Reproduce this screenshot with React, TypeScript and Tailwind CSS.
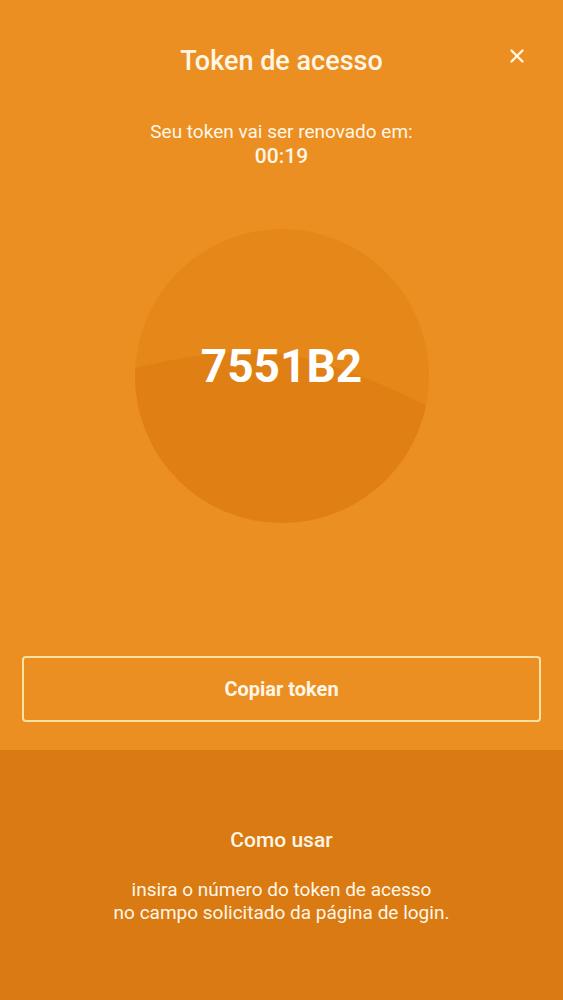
import { X } from "lucide-react";

export default function App() {
  return (
    <div
      className="relative flex h-[1000px] w-full flex-col bg-[#ec8f22] text-[#fff6e6]"
      style={{ fontFamily: "Roboto, 'Noto Sans', sans-serif" }}
    >
      {/* Close */}
      <button className="absolute right-[35px] top-[45px] flex h-[22px] w-[22px] items-center justify-center text-[#fff6e6]">
        <X size={22} strokeWidth={2.6} />
      </button>

      {/* Top */}
      <div className="flex flex-1 flex-col items-center">
        <h1 className="pt-[45px] text-[27px] font-medium leading-[32px]">Token de acesso</h1>

        <div className="mt-[42px] flex flex-col items-center">
          <p className="text-[19px] leading-[25px]">Seu token vai ser renovado em:</p>
          <p className="text-[21px] font-medium leading-[25px]">00:19</p>
        </div>

        {/* Token circle */}
        <div className="relative mt-[60px] flex h-[294px] w-[294px] items-center justify-center overflow-hidden rounded-full bg-[#e6871a]">
          <svg className="absolute inset-0" width="294" height="294" viewBox="0 0 294 294">
            <path
              d="M0 139 C 50 128, 95 120, 135 123 S 240 150, 294 178 L294 294 L0 294 Z"
              fill="#e07f13"
            />
          </svg>
          <span className="relative -mt-[20px] text-[46px] font-bold leading-none text-white">
            7551B2
          </span>
        </div>

        <div className="mt-[133px] w-full px-[22px]">
          <button className="flex h-[66px] w-full items-center justify-center rounded-[4px] border-2 border-[#ffe1a0] text-[20px] font-bold text-[#fff6e6]">
            Copiar token
          </button>
        </div>
      </div>

      {/* How to use */}
      <div className="flex h-[250px] flex-col items-center bg-[#d97a12] pt-[76px] text-center">
        <h2 className="text-[21px] font-medium leading-[28px]">Como usar</h2>
        <p className="mt-[24px] text-[19px] leading-[23px]">
          insira o número do token de acesso
          <br />
          no campo solicitado da página de login.
        </p>
      </div>
    </div>
  );
}
